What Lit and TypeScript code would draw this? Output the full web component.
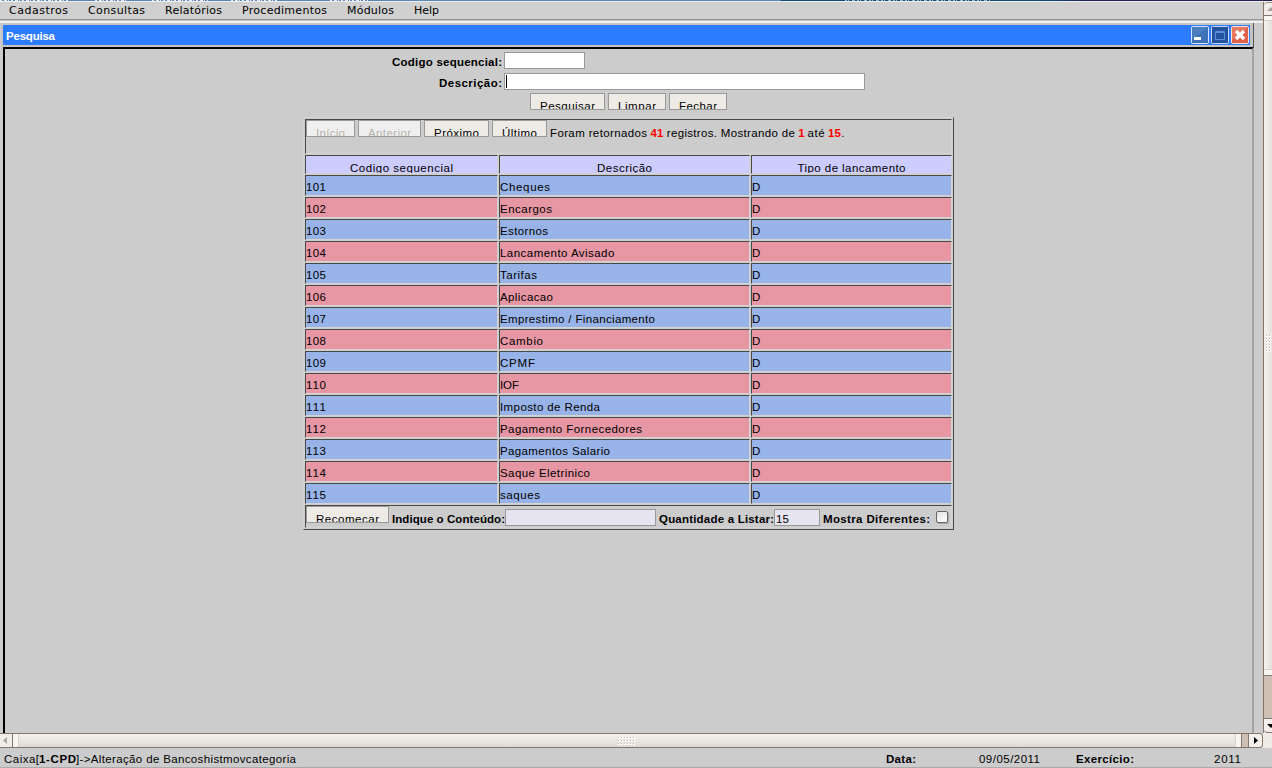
import { LitElement, html, css, svg } from "lit";
import { customElement, property } from "lit/decorators.js";
import { styleMap } from "lit/directives/style-map.js";

const pen = document.createElement("canvas").getContext("2d")!;

/** A single line of text tracked out to fill a given width. */
@customElement("fit-text")
class FitText extends LitElement {
  static styles = css`
    :host { display: block; flex: none; height: 12px; }
    .t { display: block; white-space: pre; line-height: 12px; font-size: 11.5px; font-family: "Liberation Sans", Arial, sans-serif; }
    .b { font-weight: bold; }
    .m { font-size: 11px; font-family: "DejaVu Sans", sans-serif; }
  `;
  @property() text = "";
  @property({ type: Number }) w = 0;
  @property() kind = "";
  render() {
    pen.font = this.kind === "m" ? '11px "DejaVu Sans"' : `${this.kind === "b" ? "bold " : ""}11.5px "Liberation Sans"`;
    const gaps = Math.max(1, this.text.length - 1);
    const ls = this.text.length > 1 ? (this.w - pen.measureText(this.text).width) / gaps : 0;
    return html`<span class="t ${this.kind}" style=${styleMap({ width: `${this.w}px`, letterSpacing: `${ls.toFixed(3)}px` })}>${this.text}</span>`;
  }
}

const fit = (text: string, w: number, kind = "") => html`<fit-text .text=${text} .w=${w} .kind=${kind}></fit-text>`;

const MENU: [string, number][] = [
  ["Cadastros", 59], ["Consultas", 57], ["Relatórios", 57], ["Procedimentos", 85], ["Módulos", 47], ["Help", 25],
];

const ROWS: [string, string, number][] = [
  ["101", "Cheques", 50], ["102", "Encargos", 52], ["103", "Estornos", 48], ["104", "Lancamento Avisado", 115],
  ["105", "Tarifas", 37], ["106", "Aplicacao", 53], ["107", "Emprestimo / Financiamento", 155], ["108", "Cambio", 43],
  ["109", "CPMF", 35], ["110", "IOF", 19], ["111", "Imposto de Renda", 100], ["112", "Pagamento Fornecedores", 142],
  ["113", "Pagamentos Salario", 110], ["114", "Saque Eletrinico", 90], ["115", "saques", 40],
];

@customElement("app-root")
class AppRoot extends LitElement {
  static styles = css`
    :host { display: flex; flex-direction: column; width: 1272px; height: 768px; overflow: hidden; background: #ccc; color: #000; }
    * { box-sizing: border-box; }
    .strip { flex: none; height: 2px; border-bottom: 1px solid #eee; background: linear-gradient(90deg, #5a86b8 0 780px, #0f4d7c 781px 1040px, #232150 1090px); }
    .strip svg { display: block; }
    .main { flex: none; height: 746px; display: flex; }
    .left { width: 1263px; display: flex; flex-direction: column; }
    .menu { flex: none; height: 21px; padding: 3px 0 0 9px; display: flex; gap: 20px; background: linear-gradient(#d0d0d0 0 17px, #949494 17px 18px, #c4c4c4 18px 19px, #f0f0f0 19px 21px); }
    .window { flex: none; height: 710px; width: 1254px; margin-left: 1px; display: flex; flex-direction: column; }
    .frame { flex: none; width: 1253px; height: 24px; padding: 2px 1px 2px 2px; background: #c4c4c4; border-right: 1px solid #555; }
    .title { height: 20px; width: 1247px; background: #2d7bff; color: #fff; display: flex; padding: 5px 1px 0 3px; }
    .tools { margin: -4px 0 0 auto; display: flex; gap: 2px; }
    .tools svg { display: block; }
    .body { flex: 1; margin-left: 2px; width: 1251px; border-top: 2px solid #000; border-left: 2px solid #000; border-right: 2px solid #a3a3a3; padding-top: 3px; }
    .line { display: flex; height: 21px; }
    .label { width: 497px; display: flex; justify-content: flex-end; padding: 4px 0 0; margin-right: 2px; }
    .input { flex: none; height: 17px; border: 1px solid #999; background: #fff; display: flex; padding: 1px; }
    .cod { width: 81px; } .des { width: 361px; }
    .caret { width: 1px; height: 13px; background: #000; }
    .buttons { display: flex; gap: 3px; height: 24px; padding-left: 525px; margin-top: -1px; }
    .btn { flex: none; height: 17px; border: 1px solid #999; background: #eeebe7; overflow: hidden; padding: 6px 9px 0; }
    .off { background: #efefef; color: #b5b2ac; }
    .table { margin: 0 0 0 298px; width: 651px; height: 413px; border: 1px solid; border-color: #d3d3d3 #494949 #494949 #d3d3d3; padding: 1px; display: grid; grid-template-columns: 193px 251px 201px; grid-template-rows: 35px 19px repeat(15, 21px) 23px; gap: 1px; }
    .cell { border: 1px solid; border-color: #494949 #d3d3d3 #d3d3d3 #494949; overflow: hidden; padding-top: 5px; display: flex; min-width: 0; }
    .wide { grid-column: 1 / 4; padding-top: 0; }
    .head { background: #ccf; justify-content: center; padding-top: 6px; }
    .blue { background: #97b3e7; } .pink { background: #e796a4; }
    .nav { display: flex; gap: 3px; margin-right: 3px; }
    .msg { display: flex; gap: 3.4px; padding-top: 7px; }
    .red { color: #f00; }
    .dot { margin-left: -3px; }
    .fl { padding-top: 7px; margin-left: 3px; }
    .fi { margin-top: 3px; background: #e6e4f1; padding: 3px 1px 0; }
    .f1 { width: 151px; } .f2 { width: 46px; }
    .check { width: 12px; height: 12px; margin: 5px 0 0 6px; border: 1px solid #666; border-radius: 2px; background: linear-gradient(135deg, #e4e4e4, #fff); box-shadow: 1px 1px 0 #aaa; }
    .hbar { flex: none; display: flex; height: 15px; border: 1px solid #84766b; border-left: 0; border-radius: 0 4px 4px 0; overflow: hidden; }
    .ha { width: 13px; background: #f0ede9; border-right: 1px solid #84766b; }
    .hthumb { width: 1229px; display: flex; justify-content: center; background: linear-gradient(90deg, #f7f5f2 5px, #d8d2cb 5px 6px, transparent 6px 1222px, #d8d2cb 1222px 1223px, #f7f5f2 1223px), linear-gradient(#f5f2ef, #dfd9d2); border-right: 1px solid #84766b; }
    .htrough { width: 7px; background: #cdbfb4; border-right: 1px solid #84766b; }
    .hb { width: 13px; background: #f3f0ed; }
    .vwrap { width: 9px; background: #efebe6; display: flex; flex-direction: column; }
    .vbar { height: 731px; border-left: 1px solid #84766b; display: flex; flex-direction: column; }
    .va { flex: none; height: 14px; background: #f0ede9; border-top: 1px solid #a09488; border-bottom: 1px solid #84766b; border-radius: 4px 0 0 0; }
    .vthumb { flex: none; height: 660px; padding: 319px 0 0 2px; background: linear-gradient(#f7f5f2 4px, #d8d2cb 4px 5px, transparent 5px 653px, #d8d2cb 653px 654px, #f7f5f2 654px), linear-gradient(90deg, #f5f2ef, #e6e0da); border-bottom: 1px solid #84766b; }
    .vtrough { flex: none; height: 43px; background: #cdbfb4; border-bottom: 1px solid #84766b; }
    .vb { flex: 1; background: #f3f0ed; border-bottom: 1px solid #84766b; border-radius: 0 0 0 4px; }
    .va svg, .vb svg, .ha svg, .hb svg, .vthumb svg, .hthumb svg { display: block; }
    .status { flex: none; height: 20px; padding: 5px 0 0 4px; display: flex; border-bottom: 1px solid #aaa; }
    .s1 { margin-left: 590px; } .s2 { margin-left: 63px; } .s3 { margin-left: 36px; } .s4 { margin-left: 80px; }
  `;

  private dots(cols: number, rows: number) {
    const out = [];
    for (let r = 0; r < rows; r++)
      for (let c = 0; c < cols; c++)
        out.push(svg`<path d="M${c * 3} ${r * 3}h2v2h-2z" fill="#fff"/><path d="M${c * 3} ${r * 3}h1v1h-1z" fill="#c0b8b0"/>`);
    return out;
  }

  private btn(text: string, w: number, off = false) {
    return html`<div class="btn ${off ? "off" : ""}">${fit(text, w)}</div>`;
  }

  render() {
    return html`
      <div class="strip">
        <svg width="1272" height="1" shape-rendering="crispEdges">
          <path d="M0 .5H70M95 .5H128M152 .5H208M231 .5H278M330 .5H368" stroke="#e4edf5" stroke-dasharray="2 2 3 1 1 2" />
          <path d="M845 .5H990" stroke="#9bb8cc" stroke-dasharray="2 1 1 3 3 2" />
        </svg>
      </div>
      <div class="main">
        <div class="left">
          <div class="menu">${MENU.map(([t, w]) => fit(t, w, "m"))}</div>
          <div class="window">
            <div class="frame">
              <div class="title">
                ${fit("Pesquisa", 49, "b")}
                <div class="tools">
                  <svg width="18" height="18"><rect x=".5" y=".5" width="17" height="17" rx="1" fill="#3d72b8" stroke="#d5e4fa"/><path d="M1 1h16L1 14z" fill="#6290ca" opacity=".4"/><path d="M3 11h7v3H3z" fill="#fff"/></svg>
                  <svg width="18" height="18"><rect x=".5" y=".5" width="17" height="17" rx="1" fill="#23529f" stroke="#c5d7f3"/><path d="M4.5 5.5h9v8h-9zM4 6.5h10" fill="none" stroke="#5c8fdc"/></svg>
                  <svg width="18" height="18"><rect x=".5" y=".5" width="17" height="17" rx="1" fill="#df6248" stroke="#fbe3dc"/><path d="M1 1h16L1 14z" fill="#f09078" opacity=".5"/><path d="M5 5l8 8M13 5l-8 8" stroke="#fff" stroke-width="3.4"/></svg>
                </div>
              </div>
            </div>
            <div class="body">
              <div class="line"><div class="label">${fit("Codigo sequencial:", 110, "b")}</div><div class="input cod"></div></div>
              <div class="line"><div class="label">${fit("Descrição:", 63, "b")}</div><div class="input des"><div class="caret"></div></div></div>
              <div class="buttons">${this.btn("Pesquisar", 55)}${this.btn("Limpar", 38)}${this.btn("Fechar", 38)}</div>
              <div class="table">
                <div class="cell wide">
                  <div class="nav">${this.btn("Início", 29, true)}${this.btn("Anterior", 43, true)}${this.btn("Próximo", 45)}${this.btn("Último", 35)}</div>
                  <div class="msg">
                    ${fit("Foram retornados", 97)}<div class="red">${fit("41", 13, "b")}</div>
                    ${fit("registros. Mostrando de", 128)}<div class="red">${fit("1", 6, "b")}</div>
                    ${fit("até", 17)}<div class="red">${fit("15", 13, "b")}</div><div class="dot">${fit(".", 3)}</div>
                  </div>
                </div>
                <div class="cell head">${fit("Codigo sequencial", 103)}</div>
                <div class="cell head">${fit("Descrição", 55)}</div>
                <div class="cell head">${fit("Tipo de lancamento", 108)}</div>
                ${ROWS.map(([id, name, w], i) => {
                  const c = i % 2 ? "pink" : "blue";
                  return html`<div class="cell ${c}">${fit(id, 20)}</div><div class="cell ${c}">${fit(name, w)}</div><div class="cell ${c}">${fit("D", 9)}</div>`;
                })}
                <div class="cell wide">
                  ${this.btn("Recomeçar", 63)}
                  <div class="fl">${fit("Indique o Conteúdo:", 113, "b")}</div><div class="input fi f1"></div>
                  <div class="fl">${fit("Quantidade a Listar:", 115, "b")}</div><div class="input fi f2">${fit("15", 13)}</div>
                  <div class="fl">${fit("Mostra Diferentes:", 107, "b")}</div><div class="check"></div>
                </div>
              </div>
            </div>
          </div>
          <div class="hbar">
            <div class="ha"><svg width="12" height="13"><path d="M7 3v7L3 6.5z" fill="#aaa69f"/></svg></div>
            <div class="hthumb"><svg width="18" height="13"><g transform="translate(0 3)">${this.dots(6, 3)}</g></svg></div>
            <div class="htrough"></div>
            <div class="hb"><svg width="13" height="13"><path d="M5 3v7l4-3.5z" fill="#000"/></svg></div>
          </div>
        </div>
        <div class="vwrap">
          <div class="vbar">
            <div class="va"><svg width="8" height="12"><path d="M3 8h8L7 4z" fill="#aaa69f"/></svg></div>
            <div class="vthumb"><svg width="6" height="18">${this.dots(2, 6)}</svg></div>
            <div class="vtrough"></div>
            <div class="vb"><svg width="8" height="12"><path d="M3 5h8L7 9z" fill="#000"/></svg></div>
          </div>
        </div>
      </div>
      <div class="status">
        ${fit("Caixa[", 35)}${fit("1-CPD", 37, "b")}${fit("]->Alteração de Bancoshistmovcategoria", 220)}
        <div class="s1">${fit("Data:", 30, "b")}</div>
        <div class="s2">${fit("09/05/2011", 61)}</div>
        <div class="s3">${fit("Exercício:", 58, "b")}</div>
        <div class="s4">${fit("2011", 27)}</div>
      </div>
    `;
  }
}
